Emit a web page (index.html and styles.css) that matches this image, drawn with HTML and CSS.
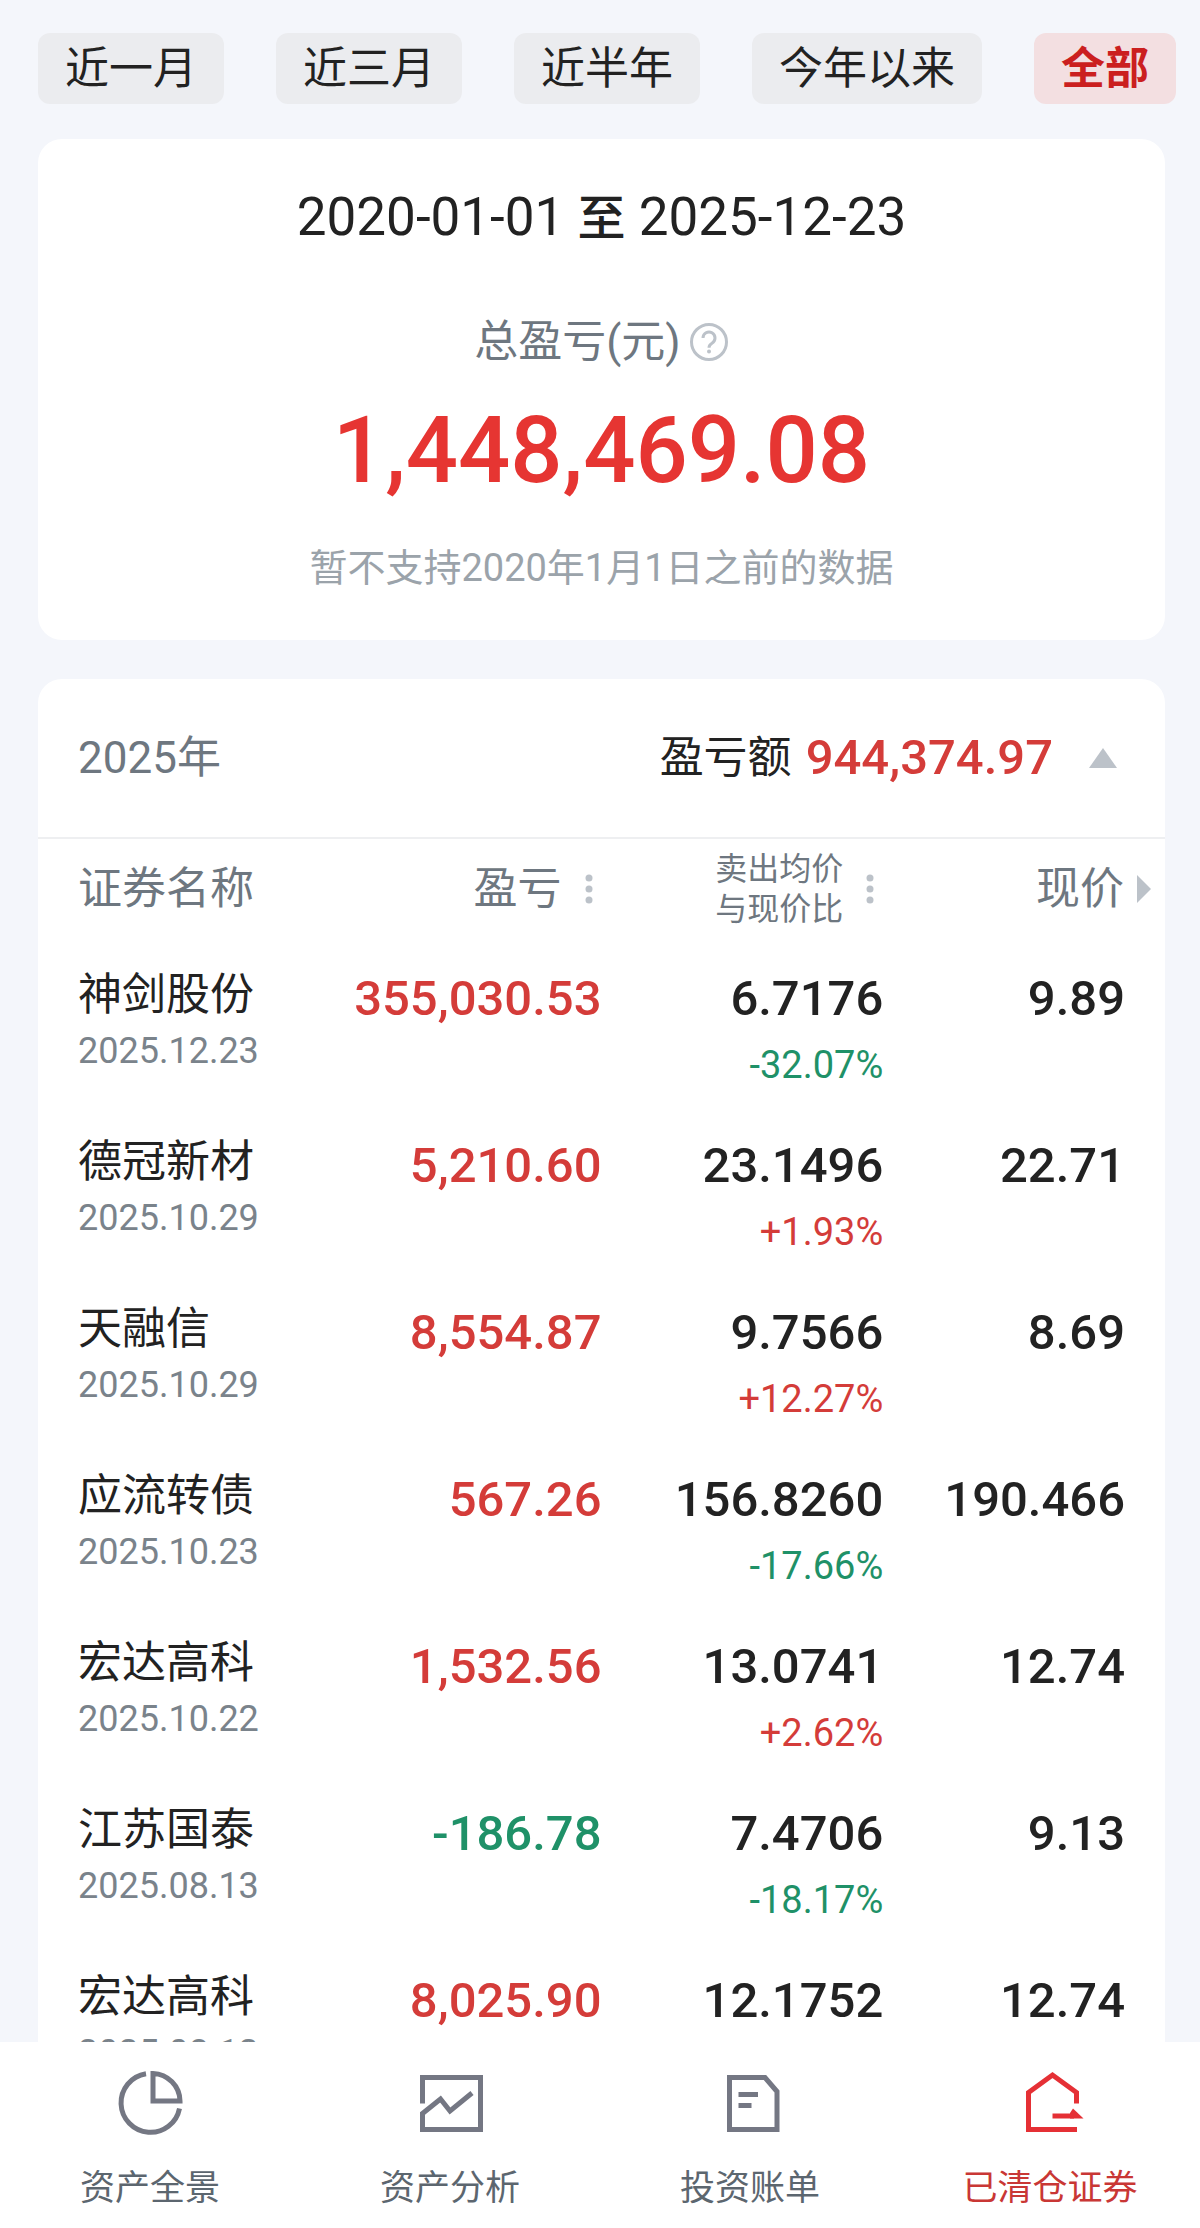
FILE: index.html
```html
<!DOCTYPE html>
<html lang="zh-CN">
<head>
  <meta charset="UTF-8" />
  <meta name="viewport" content="width=device-width, initial-scale=1.0"/>
  <title>已清仓证券</title>
  <link rel="stylesheet" href="styles.css">
</head>
<body>

<main class="content">
  <div class="tabs">
    <button class="tab">近一月</button>
    <button class="tab">近三月</button>
    <button class="tab">近半年</button>
    <button class="tab">今年以来</button>
    <button class="tab active">全部</button>
  </div>

  <section class="card summary">
    <div class="range">2020-01-01 <span class="to">至</span> 2025-12-23</div>
    <div class="label">
      总盈亏(元)
      <svg class="help" viewBox="0 0 40 40">
        <circle cx="20" cy="20" r="17.5"/>
        <path d="M14 16a6 6 0 1 1 9 5.200q-3 1.800-3 4.500"/>
        <circle class="dot" cx="20" cy="29.500" r="2"/>
      </svg>
    </div>
    <div class="total">1,448,469.08</div>
    <div class="note">暂不支持2020年1月1日之前的数据</div>
  </section>

  <section class="card">
    <div class="year">
      <span class="year-name">2025年</span>
      <span class="year-label">盈亏额</span>
      <span class="year-amount">944,374.97</span>
      <svg class="arrow-up" viewBox="0 0 28 20"><path d="M14 0L28 20H0z"/></svg>
    </div>

    <table class="stocks">
      <thead>
        <tr>
          <th>证券名称</th>
          <th><div class="head">盈亏<svg class="dots" viewBox="0 0 8 30"><circle cx="4" cy="4" r="3.500"/><circle cx="4" cy="15" r="3.500"/><circle cx="4" cy="26" r="3.500"/></svg></div></th>
          <th><div class="head"><span class="two-line">卖出均价<br>与现价比</span><svg class="dots" viewBox="0 0 8 30"><circle cx="4" cy="4" r="3.500"/><circle cx="4" cy="15" r="3.500"/><circle cx="4" cy="26" r="3.500"/></svg></div></th>
          <th><div class="head last">现价<svg class="arrow-right" viewBox="0 0 14 28"><path d="M0 0L14 14L0 28z"/></svg></div></th>
        </tr>
      </thead>
      <tbody>
        <tr>
          <td><div class="name">神剑股份</div><div class="date">2025.12.23</div></td>
          <td class="num up">355,030.53</td>
          <td class="num">6.7176<div class="pct down">-32.07%</div></td>
          <td class="num">9.89</td>
        </tr>
        <tr>
          <td><div class="name">德冠新材</div><div class="date">2025.10.29</div></td>
          <td class="num up">5,210.60</td>
          <td class="num">23.1496<div class="pct up">+1.93%</div></td>
          <td class="num">22.71</td>
        </tr>
        <tr>
          <td><div class="name">天融信</div><div class="date">2025.10.29</div></td>
          <td class="num up">8,554.87</td>
          <td class="num">9.7566<div class="pct up">+12.27%</div></td>
          <td class="num">8.69</td>
        </tr>
        <tr>
          <td><div class="name">应流转债</div><div class="date">2025.10.23</div></td>
          <td class="num up">567.26</td>
          <td class="num">156.8260<div class="pct down">-17.66%</div></td>
          <td class="num">190.466</td>
        </tr>
        <tr>
          <td><div class="name">宏达高科</div><div class="date">2025.10.22</div></td>
          <td class="num up">1,532.56</td>
          <td class="num">13.0741<div class="pct up">+2.62%</div></td>
          <td class="num">12.74</td>
        </tr>
        <tr>
          <td><div class="name">江苏国泰</div><div class="date">2025.08.13</div></td>
          <td class="num down">-186.78</td>
          <td class="num">7.4706<div class="pct down">-18.17%</div></td>
          <td class="num">9.13</td>
        </tr>
        <tr>
          <td><div class="name">宏达高科</div><div class="date">2025.08.12</div></td>
          <td class="num up">8,025.90</td>
          <td class="num">12.1752</td>
          <td class="num">12.74</td>
        </tr>
      </tbody>
    </table>
  </section>
</main>

<nav class="bottom-nav">
  <a href="#">
    <svg viewBox="0 0 72 72">
      <path d="M32 6.700A29.500 29.500 0 1 0 65.500 41.500"/>
      <path d="M39 6.500A28 28 0 0 1 66 34H39z"/>
    </svg>
    资产全景
  </a>
  <a href="#">
    <svg viewBox="0 0 72 72">
      <path d="M8.500 36.500V10.500H66.500V62.500H8.500V46.500L26.500 32L36 44L58 26"/>
    </svg>
    资产分析
  </a>
  <a href="#">
    <svg viewBox="0 0 72 72">
      <path d="M15.500 10.500H51L63 24.500V62.500H15.500z"/>
      <path d="M24.500 27.500H44M24.500 38.500H37.500"/>
    </svg>
    投资账单
  </a>
  <a href="#" class="active">
    <svg viewBox="0 0 72 72">
      <path d="M62.500 36.500V25.500L38.500 8L14.500 25.500V62.500H63"/>
      <path d="M38.500 49H60"/>
      <path class="solid" d="M59 41.500L69.500 51.500H56V46z"/>
    </svg>
    已清仓证券
  </a>
</nav>

</body>
</html>
```
FILE: styles.css
```css
* {
  box-sizing: border-box;
}

body {
  margin: 0;
  height: 100vh;
  display: flex;
  flex-direction: column;
  background-color: #f4f6fb;
  color: #222;
  font-family: Roboto, "Noto Sans CJK SC", sans-serif;
  font-size: 44px;
}

.content {
  flex: 1;
  min-height: 0;
  overflow-y: auto;
  scrollbar-width: none;
  padding: 33px 35px 0 38px;
}

.tabs {
  display: flex;
  gap: 52px;
  margin-bottom: 35px;
}

.tab {
  flex: none;
  height: 71px;
  padding: 0 27px;
  border: none;
  border-radius: 12px;
  background-color: #ebecef;
  color: #222;
  font: inherit;
  line-height: 66px;
  cursor: pointer;
}

.tab.active {
  background-color: #f3dfe1;
  color: #cb1f1f;
  font-weight: bold;
}

.card {
  margin-bottom: 39px;
  border-radius: 24px;
  background-color: #fff;
}

/* total profit */
.summary {
  display: flex;
  flex-direction: column;
  align-items: center;
  padding: 42px 40px 44px;
}

.range {
  font-size: 53px;
  line-height: 72px;
}

.to {
  font-size: 48px;
  font-weight: 500;
}

.label {
  display: flex;
  align-items: center;
  gap: 8px;
  margin-top: 54px;
  color: #6e7780;
  line-height: 66px;
}

.help {
  width: 40px;
  height: 40px;
  fill: none;
  stroke: #bcc2c9;
  stroke-width: 3;
}

.help .dot {
  fill: #bcc2c9;
  stroke: none;
}

.total {
  margin-top: 16px;
  color: #e63532;
  font-size: 92px;
  font-weight: 500;
  line-height: 120px;
}

.note {
  margin-top: 29px;
  color: #9ba3aa;
  font-size: 38px;
  line-height: 56px;
}

/* year block */
.year {
  display: flex;
  align-items: center;
  height: 160px;
  padding: 0 48px 0 40px;
  border-bottom: 2px solid #eeeff1;
  line-height: 60px;
}

.year-name {
  flex: 1;
  color: #6e7780;
}

.year-amount {
  margin-left: 14px;
  color: #d43c39;
  font-size: 49px;
  font-weight: 500;
}

.arrow-up {
  width: 28px;
  height: 20px;
  margin-left: 36px;
  fill: #bcc2c9;
}

.stocks {
  width: 100%;
  table-layout: fixed;
  border-collapse: collapse;
}

.stocks th {
  height: 100px;
  padding: 0;
  color: #6e7780;
  font-weight: normal;
  text-align: left;
  line-height: 60px;
}

.stocks th:first-child,
.stocks td:first-child {
  padding-left: 40px;
}

.head {
  display: flex;
  align-items: center;
  justify-content: flex-end;
  gap: 23px;
  padding-right: 9px;
}

.head.last {
  gap: 13px;
  padding-right: 14px;
}

.two-line {
  font-size: 32px;
  line-height: 40px;
}

.dots {
  width: 8px;
  height: 30px;
  fill: #bcc2c9;
}

.arrow-right {
  width: 14px;
  height: 28px;
  fill: #bcc2c9;
}

.stocks td {
  height: 167px;
  padding: 26px 0 0;
  vertical-align: top;
}

.name {
  line-height: 60px;
}

.date {
  color: #7a838b;
  font-size: 36px;
  line-height: 52px;
}

.stocks .num {
  padding-top: 30px;
  font-size: 49px;
  font-weight: 500;
  line-height: 60px;
  text-align: right;
}

.stocks td:last-child {
  padding-right: 40px;
}

.pct {
  margin-top: 10px;
  font-size: 38px;
  font-weight: normal;
  line-height: 52px;
}

.up {
  color: #d43c39;
}

.down {
  color: #1f9168;
}

.bottom-nav {
  display: flex;
  flex: none;
  height: 186px;
  background-color: #fff;
}

.bottom-nav a {
  flex: 1;
  display: flex;
  flex-direction: column;
  align-items: center;
  gap: 24px;
  padding-top: 25px;
  color: #5c666f;
  font-size: 35px;
  line-height: 52px;
  text-decoration: none;
}

.bottom-nav svg {
  width: 72px;
  height: 72px;
  fill: none;
  stroke: #747783;
  stroke-width: 5;
}

.bottom-nav .active {
  color: #c93735;
}

.bottom-nav .active svg {
  stroke: #e53035;
}

.bottom-nav .solid {
  fill: #e53035;
  stroke: none;
}
```
